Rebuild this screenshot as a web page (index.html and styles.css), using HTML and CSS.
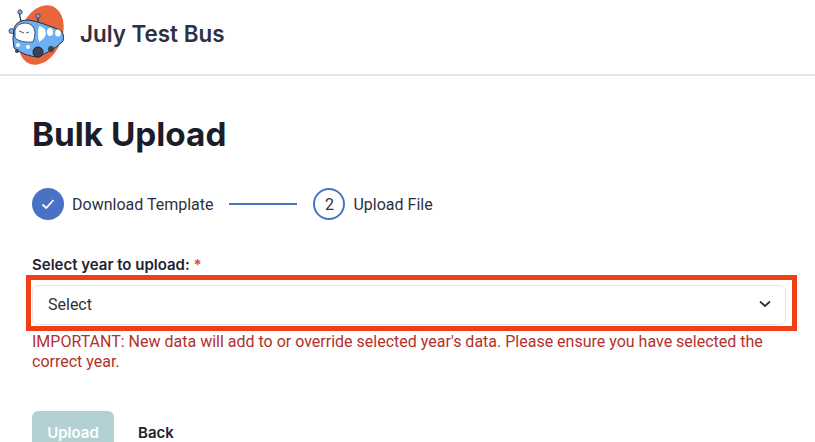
FILE: index.html
```html
<!DOCTYPE html>
<html lang="en">
<head>
    <meta charset="UTF-8">
    <meta name="viewport" content="width=device-width, initial-scale=1.0">
    <title>Bulk Upload</title>
    <link rel="stylesheet" href="styles.css">
</head>
<body>
    <header class="topbar">
        <svg class="logo" width="60" height="64" viewBox="0 0 60 64">
            <ellipse cx="33" cy="31" rx="21" ry="31" transform="rotate(22 33 31)" fill="#e9663c"/>
            <path d="M13 17 L11 8 M30 19 L30 12" stroke="#2d3142" stroke-width="1.200" fill="none"/>
            <circle cx="12" cy="8" r="2.200" fill="#6fb1f5" stroke="#2d3142" stroke-width=".8"/>
            <circle cx="30" cy="12" r="2.200" fill="#6fb1f5" stroke="#2d3142" stroke-width=".8"/>
            <circle cx="3.500" cy="27" r="2.500" fill="#6fb1f5" stroke="#2d3142" stroke-width=".8"/>
            <path d="M6 24 Q9 16 20 16 Q28 17 36 20 L52 26 Q57 30 55 37 Q50 42 44 46 L30 53 Q16 52 6 44 Q4 36 6 24 Z" fill="#6bb0f7" stroke="#2d3142" stroke-width="1"/>
            <path d="M7 26 Q9 19 18 19 Q26 20 27 28 Q27 34 25 38 Q13 39 7 34 Z" fill="#fff" stroke="#2d3142" stroke-width=".8"/>
            <path d="M31 22 Q37 23 38 29 Q37 35 31 38 Q29 30 31 22 Z" fill="#fff"/>
            <ellipse cx="42" cy="28" rx="3" ry="4" fill="#fff"/>
            <ellipse cx="50" cy="29" rx="2.800" ry="3.500" fill="#fff"/>
            <circle cx="10" cy="41" r="2" fill="#fff"/>
            <circle cx="20" cy="43" r="2" fill="#fff"/>
            <path d="M11 27 L16 29 M18 29 L21 28" stroke="#2d3142" stroke-width=".8"/>
            <circle cx="30" cy="48" r="5" fill="#3b4250" stroke="#20242e" stroke-width="1"/>
            <circle cx="43" cy="45" r="3" fill="#3b4250"/>
            <circle cx="9" cy="47" r="2" fill="#3b4250"/>
        </svg>
        <span class="brand">July Test Bus</span>
    </header>

    <main class="content">
        <h1>Bulk Upload</h1>

        <div class="stepper">
            <div class="step">
                <span class="dot dot-done">
                    <svg width="14" height="12" viewBox="0 0 14 12"><path d="M1.500 6.500 L5.200 10 L12.500 2" fill="none" stroke="#fff" stroke-width="1.800"/></svg>
                </span>
                Download Template
            </div>
            <span class="step-line"></span>
            <div class="step">
                <span class="dot dot-current">2</span>
                Upload File
            </div>
        </div>

        <label class="field-label" for="year">Select year to upload: <span class="req">*</span></label>
        <div class="select-wrap">
            <div class="select" id="year">
                <span>Select</span>
                <svg width="12" height="8" viewBox="0 0 12 8"><path d="M1 1.500 L6 6 L11 1.500" fill="none" stroke="#2d3142" stroke-width="1.800"/></svg>
            </div>
            <div class="highlight"></div>
        </div>
        <p class="warning">IMPORTANT: New data will add to or override selected year's data. Please ensure you have selected the correct year.</p>

        <div class="actions">
            <button type="button" class="btn-upload">Upload</button>
            <button type="button" class="btn-back">Back</button>
        </div>
    </main>
</body>
</html>
```

FILE: styles.css
```css
html, body {
    height: 100%;
    overflow: hidden;
}
body {
    margin: 0;
    font-family: Roboto, Arial, sans-serif;
    background-color: #fff;
    color: #1f2130;
}
.topbar {
    display: flex;
    align-items: center;
    box-sizing: border-box;
    height: 76px;
    padding: 0 0 8px 8px;
    border-bottom: 2px solid #e2e4ee;
}
.logo {
    margin-top: 6px;
}
.brand {
    margin-left: 12px;
    font-family: Inter, Arial, sans-serif;
    font-size: 22.400px;
    font-weight: 600;
    color: #2d3142;
}
.content {
    padding: 0 29px 0 32px;
}
h1 {
    margin: 36px 0 0;
    font-family: Inter, Arial, sans-serif;
    font-size: 33.300px;
    line-height: 44px;
    font-weight: 700;
    color: #1c1d2b;
}
.stepper {
    display: flex;
    align-items: center;
    margin-top: 32px;
}
.step {
    display: flex;
    align-items: center;
    gap: 8px;
    font-size: 16px;
    color: #2d3142;
}
.dot {
    display: flex;
    align-items: center;
    justify-content: center;
    width: 32px;
    height: 32px;
    box-sizing: border-box;
    border-radius: 50%;
}
.dot-done {
    background-color: #4a72c4;
}
.dot-current {
    border: 2px solid #4a72c4;
}
.step-line {
    width: 68px;
    height: 2px;
    margin: 0 16px;
    background-color: #4a72c4;
}
.field-label {
    display: block;
    margin-top: 35px;
    font-family: Inter, Arial, sans-serif;
    font-size: 15px;
    line-height: 20px;
    font-weight: 600;
    color: #1f2130;
}
.req {
    color: #d9443f;
}
.select-wrap {
    position: relative;
    margin-top: 10px;
}
.select {
    display: flex;
    align-items: center;
    justify-content: space-between;
    box-sizing: border-box;
    height: 40px;
    padding: 0 14px 2px 15px;
    border: 1px solid #e2e4ee;
    border-radius: 6px;
    font-size: 16px;
    color: #2d3142;
}
.highlight {
    position: absolute;
    top: -10px;
    left: -6px;
    right: -11px;
    bottom: -6px;
    border: 5px solid #ee3f16;
    pointer-events: none;
}
.warning {
    margin: 7px 0 0;
    font-size: 16px;
    line-height: 20px;
    color: #b3302b;
}
.actions {
    display: flex;
    align-items: center;
    gap: 9px;
    margin-top: 39px;
}
.actions button {
    height: 42px;
    padding: 0 15px;
    border: none;
    border-radius: 6px;
    font-family: Inter, Arial, sans-serif;
    font-size: 15px;
    font-weight: 600;
}
.btn-upload {
    width: 82px;
    background-color: #b3d1d3;
    color: #fff;
}
.btn-back {
    background: none;
    color: #1f2130;
}
```
